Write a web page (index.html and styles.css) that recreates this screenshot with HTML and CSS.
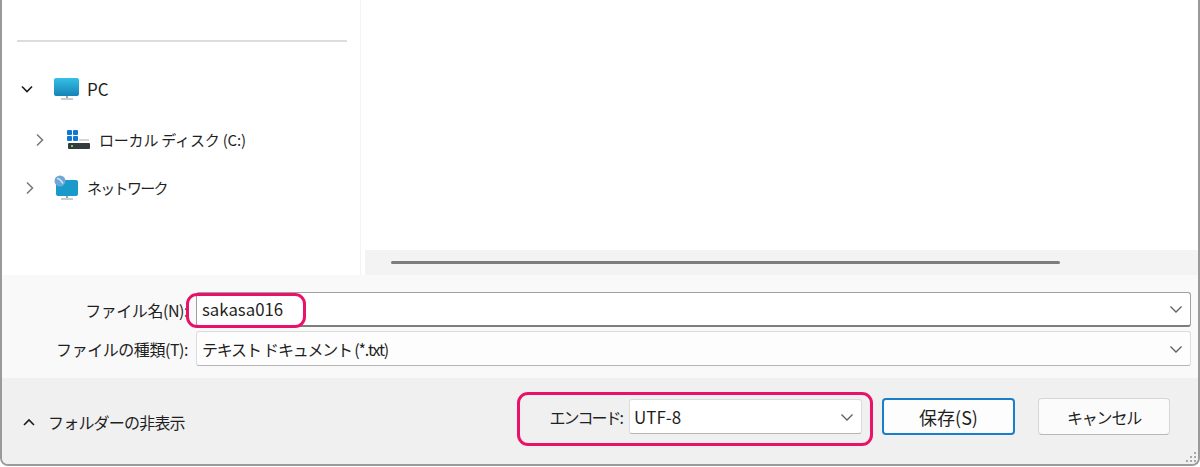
FILE: index.html
```html
<!DOCTYPE html>
<html lang="ja">
<head>
<meta charset="utf-8">
<title>名前を付けて保存</title>
<link rel="stylesheet" href="styles.css">
</head>
<body>
<div class="dialog">
  <div class="top">
    <aside class="sidebar">
      <div class="divider"></div>
      <div class="tree-row row-pc">
        <svg class="chev" width="16" height="16" viewBox="0 0 16 16"><path d="M3 5.500 8 10.500 13 5.500" fill="none" stroke="#1c1c1c" stroke-width="1.600"/></svg>
        <svg class="ico" width="28" height="24" viewBox="0 0 28 24"><defs><linearGradient id="scr" x1="0" y1="0" x2="0" y2="1"><stop offset="0" stop-color="#35c0e4"/><stop offset="1" stop-color="#1583b8"/></linearGradient></defs><rect x="1" y="1" width="25" height="18" rx="2" fill="url(#scr)"/><path d="M13 19h2v2h-2z" fill="#9aa5ad"/><path d="M8 22h12" stroke="#b4bcc2" stroke-width="1.500"/></svg>
        <span>PC</span>
      </div>
      <div class="tree-row row-disk">
        <svg class="chev" width="16" height="16" viewBox="0 0 16 16"><path d="M5 2.500 10.500 8 5 13.500" fill="none" stroke="#7b7b7b" stroke-width="1.600"/></svg>
        <svg class="ico" width="24" height="20" viewBox="0 0 24 20"><rect x="1" y="0" width="5" height="5" rx="1" fill="#0f78d4"/><rect x="7" y="0" width="5" height="5" rx="1" fill="#0f78d4"/><rect x="1" y="6" width="5" height="5" rx="1" fill="#0f78d4"/><rect x="7" y="6" width="5" height="5" rx="1" fill="#0f78d4"/><path d="M13 10h10" stroke="#c9c9c9" stroke-width="1.500"/><rect x="2" y="13" width="22" height="6" rx="1" fill="#333b3e"/><rect x="5" y="15" width="2" height="2" fill="#5fd35f"/></svg>
        <span>ローカル ディスク (C:)</span>
      </div>
      <div class="tree-row row-net">
        <svg class="chev" width="16" height="16" viewBox="0 0 16 16"><path d="M5 2.500 10.500 8 5 13.500" fill="none" stroke="#7b7b7b" stroke-width="1.600"/></svg>
        <svg class="ico" width="28" height="26" viewBox="0 0 28 26"><rect x="4" y="5" width="22" height="16" rx="2" fill="#1a9acb"/><circle cx="8" cy="6" r="5.500" fill="#6da6d8"/><path d="M5 3.500c3 0 4 2 6 5" stroke="#d7e6f2" stroke-width="1.500" fill="none"/><path d="M14 21h2v2h-2z" fill="#9aa5ad"/><path d="M9 24h12" stroke="#b4bcc2" stroke-width="1.500"/></svg>
        <span>ネットワーク</span>
      </div>
    </aside>
    <main class="content">
      <div class="pane"></div>
      <div class="scrollbar"><div class="thumb"></div></div>
    </main>
  </div>
  <section class="fields">
    <div class="field">
      <label class="field-label">ファイル名(N):</label>
      <div class="combo combo-active"><span class="val-name">sakasa016</span>
        <svg width="14" height="14" viewBox="0 0 14 14"><path d="M1.500 4.500 7 10 12.500 4.500" fill="none" stroke="#5f5f5f" stroke-width="1.300"/></svg>
      </div>
    </div>
    <div class="field">
      <label class="field-label">ファイルの種類(T):</label>
      <div class="combo"><span class="val-type">テキスト ドキュメント (*.txt)</span>
        <svg width="14" height="14" viewBox="0 0 14 14"><path d="M1.500 4.500 7 10 12.500 4.500" fill="none" stroke="#5f5f5f" stroke-width="1.300"/></svg>
      </div>
    </div>
  </section>
  <footer class="footer">
    <div class="toggle">
      <svg width="14" height="14" viewBox="0 0 14 14"><path d="M2 10 7 5 12 10" fill="none" stroke="#1c1c1c" stroke-width="1.600"/></svg>
      <span>フォルダーの非表示</span>
    </div>
    <div class="actions">
      <span class="enc-label">エンコード:</span>
      <div class="combo enc"><span class="val-enc">UTF-8</span>
        <svg width="14" height="14" viewBox="0 0 14 14"><path d="M1.500 4.500 7 10 12.500 4.500" fill="none" stroke="#5f5f5f" stroke-width="1.300"/></svg>
      </div>
      <button class="btn btn-primary">保存(S)</button>
      <button class="btn btn-cancel">キャンセル</button>
    </div>
    <svg class="grip" width="14" height="14" viewBox="0 0 14 14" fill="#a8a8a8"><rect x="10" y="2" width="2" height="2"/><rect x="6" y="6" width="2" height="2"/><rect x="10" y="6" width="2" height="2"/><rect x="2" y="10" width="2" height="2"/><rect x="6" y="10" width="2" height="2"/><rect x="10" y="10" width="2" height="2"/></svg>
  </footer>
  <div class="mark mark-name"></div>
  <div class="mark mark-enc"></div>
</div>
</body>
</html>
```
FILE: styles.css
```css
* { box-sizing: border-box; }
html, body { margin: 0; height: 467px; overflow: hidden; background: #fff; }
body { font-family: "Noto Sans CJK JP", "Noto Sans", sans-serif; font-size: 16px; color: #1f1f1f; }
.dialog {
  position: relative;
  width: 1200px;
  height: 466px;
  display: flex;
  flex-direction: column;
  border-left: 2px solid #9a9a9a;
  border-right: 2px solid #9a9a9a;
  border-bottom: 2px solid #9a9a9a;
  border-bottom-left-radius: 8px;
  border-bottom-right-radius: 8px;
  overflow: hidden;
}
.top { height: 275px; display: flex; background: #fff; }
.sidebar { width: 359px; padding: 40px 0 0 15px; border-right: 1px solid #f3f3f3; }
.divider { width: 330px; height: 2px; background: #dcdcdc; margin-bottom: 34px; }
.tree-row { display: flex; align-items: center; height: 26px; line-height: 26px; white-space: nowrap; }
.row-pc { margin-bottom: 25px; font-size: 17px; }
.row-pc .chev { margin-left: 2px; }
.row-pc .ico { margin-left: 18px; margin-right: 6px; }
.row-disk { margin-bottom: 22px; padding-left: 15px; font-size: 15px; letter-spacing: -0.2px; }
.row-disk .ico { margin-left: 18px; margin-right: 9px; }
.row-net { font-size: 15px; letter-spacing: -1.7px; }
.row-net .chev { margin-left: 5px; }
.row-net .ico { margin-left: 14px; margin-right: 7px; }
.content { flex: 1; display: flex; flex-direction: column; padding-left: 4px; }
.pane { flex: 1; }
.scrollbar { height: 25px; background: #f3f3f3; padding: 11px 0 0 26px; }
.thumb { width: 669px; height: 3px; background: #7d7d7d; border-radius: 2px; }
.fields { height: 103px; background: #f9f9f9; padding-top: 17px; display: flex; flex-direction: column; gap: 4px; }
.field { display: flex; align-items: center; height: 35px; }
.field-label { width: 186px; text-align: right; white-space: nowrap; letter-spacing: -0.45px; }
.combo {
  display: flex;
  align-items: center;
  justify-content: space-between;
  background: #fdfdfd;
  border: 1px solid #dcdcdc;
  border-bottom-color: #b5b5b5;
  border-radius: 3px;
  padding: 0 7px 0 5px;
  height: 35px;
  white-space: nowrap;
}
.field .combo { width: 995px; margin-left: 8px; }
.combo-active { background: #fff; border: 1px solid #a0a0a0; border-bottom: 2px solid #7d7d7d; }
.val-name { font-size: 16.8px; }
.val-type { letter-spacing: -1.2px; }
.val-enc { font-size: 17px; margin-left: -1px; }
.footer { flex: 1; position: relative; display: flex; align-items: center; justify-content: space-between; background: #f0f0f0; padding: 0 28px 9px 20px; }
.toggle { display: flex; align-items: center; gap: 12px; letter-spacing: -0.8px; margin-top: 10px; }
.actions { display: flex; align-items: center; }
.enc-label { margin-right: 7px; letter-spacing: -2px; }
.enc { width: 233px; background: #fff; }
.btn {
  font: inherit;
  color: inherit;
  width: 133px;
  height: 37px;
  padding: 0;
  background: #fbfbfb;
  border: 1px solid #d6d6d6;
  border-bottom-color: #b8b8b8;
  border-radius: 4px;
}
.btn-primary { border: 2px solid #1a7fc9; background: #fdfdfd; margin-left: 20px; font-size: 18px; }
.btn-cancel { width: 132px; margin-left: 23px; letter-spacing: -1.2px; }
.grip { position: absolute; right: 0; bottom: 0; }
.mark { position: absolute; border: 3px solid #e8126a; pointer-events: none; background: transparent; }
.mark-name { left: 184px; top: 293px; width: 120px; height: 35px; border-radius: 11px; }
.mark-enc { left: 515px; top: 392px; width: 356px; height: 54px; border-radius: 11px; }
```
